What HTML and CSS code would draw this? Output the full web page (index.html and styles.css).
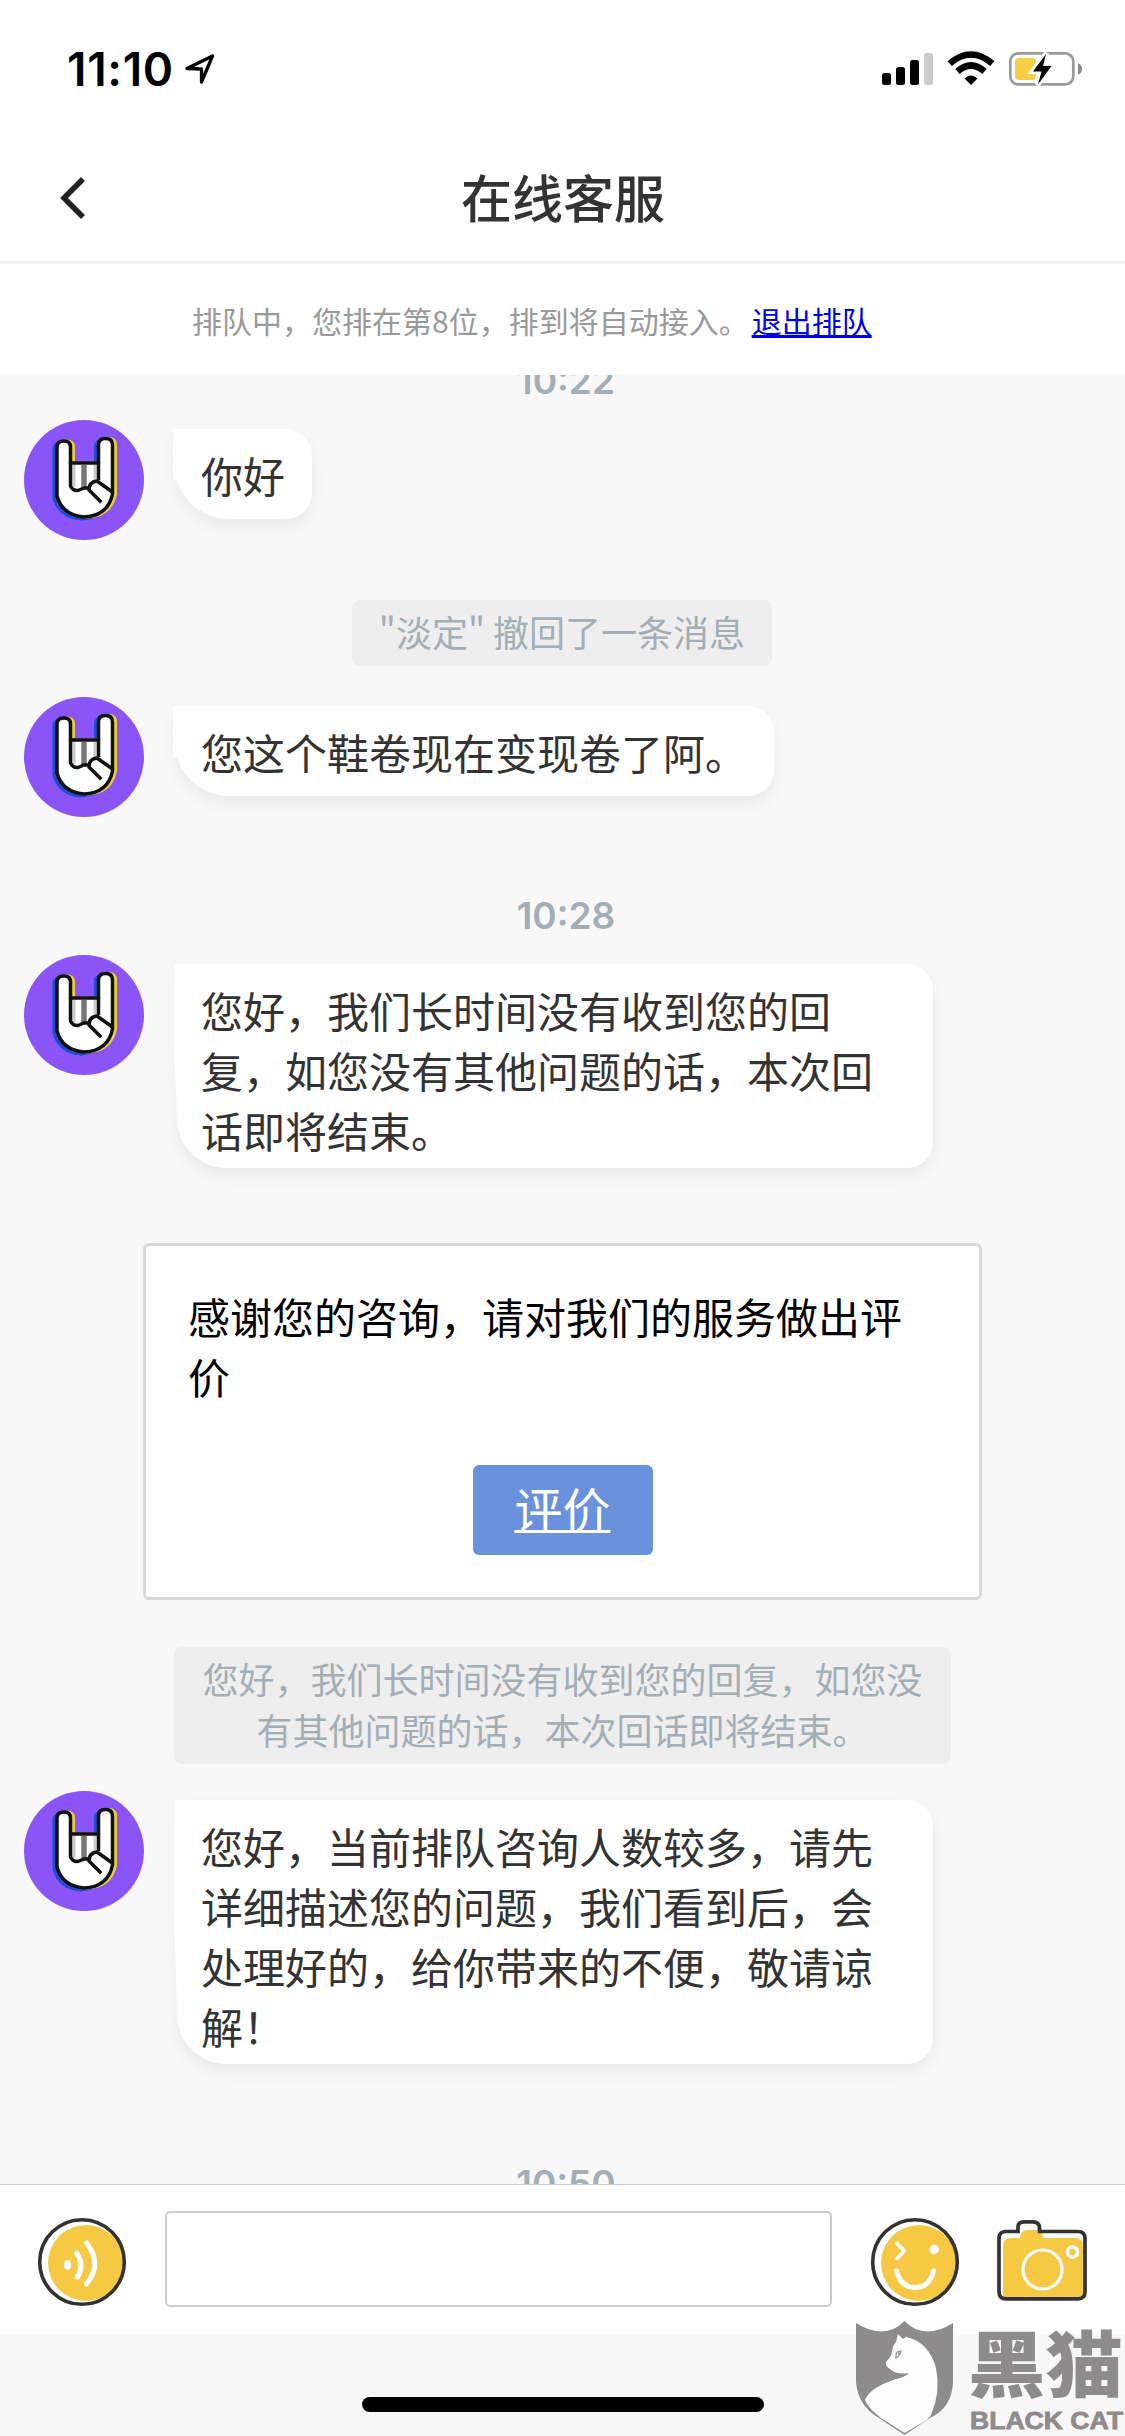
FILE: index.html
```html
<!DOCTYPE html>
<html lang="zh-CN">
<head>
<meta charset="utf-8">
<title>在线客服</title>
<link rel="stylesheet" href="styles.css">
</head>
<body>
<svg class="defs" width="0" height="0">
  <symbol id="avatar" viewBox="0 0 120 120">
    <circle cx="60" cy="60" r="60" fill="#8b54f7"/>
    <g stroke-linejoin="round">
      <path transform="translate(-3 2)" fill="#1b4fd8" stroke="#1b4fd8" stroke-width="3" d="M33 27Q33 21 40 21Q46.500 21 46.500 27V43H74.500V25Q74.500 18.500 81.500 18.500Q88.500 18.500 88.500 25V74Q84 96 60 97Q38 95 33 76Z"/>
      <path transform="translate(3 0)" fill="#e8d03c" stroke="#e8d03c" stroke-width="3" d="M33 27Q33 21 40 21Q46.500 21 46.500 27V43H74.500V25Q74.500 18.500 81.500 18.500Q88.500 18.500 88.500 25V74Q84 96 60 97Q38 95 33 76Z"/>
      <path fill="#fff" stroke="#111" stroke-width="3.500" d="M33 27Q33 21 40 21Q46.500 21 46.500 27V43H74.500V25Q74.500 18.500 81.500 18.500Q88.500 18.500 88.500 25V74Q84 96 60 97Q38 95 33 76Z"/>
      <path d="M60 45V68" stroke="#777" stroke-width="5.500" fill="none"/>
      <path d="M50 45V67M71 45V60" stroke="#ccc" stroke-width="3" fill="none"/>
      <path d="M46.500 42V66Q49 71 54 70.500L60 68H65M74.500 42V60" fill="none" stroke="#111" stroke-width="3.500"/>
      <path d="M76 81L65 70Q65 62 73 61L87 71" fill="#fff" stroke="#111" stroke-width="3.500" stroke-linecap="square"/>
    </g>
  </symbol>
</svg>
<div class="screen">
  <header class="status">
    <div class="clock">
      <span>11:10</span>
      <svg width="32" height="32" viewBox="0 0 32 32"><path d="M3 15.500L28.500 3L17.500 29V16Z" fill="none" stroke="#000" stroke-width="3.300" stroke-linejoin="round"/></svg>
    </div>
    <svg width="204" height="36" viewBox="0 0 204 36">
      <rect x="2" y="22" width="9" height="12" rx="2.500"/>
      <rect x="16" y="16" width="9" height="18" rx="2.500"/>
      <rect x="30" y="9" width="9" height="25" rx="2.500"/>
      <rect x="44" y="2" width="9" height="32" rx="2.500" fill="#ccc"/>
      <path d="M69.700 12.500Q91 -5.500 112.300 12.500" fill="none" stroke="#000" stroke-width="6.500"/>
      <path d="M77.500 20.500Q91 8.500 104.500 20.500" fill="none" stroke="#000" stroke-width="6.500"/>
      <path d="M84.500 27.500Q91 21.500 97.500 27.500L91 34Z"/>
      <rect x="130.300" y="2.400" width="63" height="31" rx="8" fill="none" stroke="#9a9a9a" stroke-width="2.700"/>
      <rect x="135" y="7" width="21" height="22" rx="4" fill="#f8ce45"/>
      <path d="M198 12Q202 14 202 18Q202 22 198 24Z" fill="#8c8c8c"/>
      <path d="M166.500 2L152.500 20.500H161L157.500 34L171.500 15H163Z" stroke="#fff" stroke-width="5" fill="#fff"/>
      <path d="M166 3L153 20.500H161.500L158 33.500L171.500 15H163Z"/>
    </svg>
  </header>
  <nav class="titlebar">
    <svg width="32" height="44" viewBox="0 0 32 44"><path d="M26 3L7 22L26 41" fill="none" stroke="#222" stroke-width="5.500"/></svg>
    <h1>在线客服</h1>
  </nav>
  <div class="queue"><span>排队中，您排在第8位，排到将自动接入。</span><a href="#">退出排队</a></div>

  <main class="chat">
    <time class="stamp stamp-first">10:22</time>
    <div class="row after-stamp">
      <svg class="avatar"><use href="#avatar"/></svg>
      <p class="bubble">你好</p>
    </div>
    <div class="notice notice-recall">"淡定" 撤回了一条消息</div>
    <div class="row after-recall">
      <svg class="avatar"><use href="#avatar"/></svg>
      <p class="bubble">您这个鞋卷现在变现卷了阿。</p>
    </div>
    <time class="stamp stamp-mid">10:28</time>
    <div class="row after-stamp">
      <svg class="avatar"><use href="#avatar"/></svg>
      <p class="bubble bubble-long">您好，我们长时间没有收到您的回<br>复，如您没有其他问题的话，本次回<br>话即将结束。</p>
    </div>
    <section class="card">
      <p>感谢您的咨询，请对我们的服务做出评价</p>
      <a class="rate" href="#">评价</a>
    </section>
    <div class="notice notice-timeout">您好，我们长时间没有收到您的回复，如您没<br>有其他问题的话，本次回话即将结束。</div>
    <div class="row after-notice">
      <svg class="avatar"><use href="#avatar"/></svg>
      <p class="bubble bubble-long">您好，当前排队咨询人数较多，请先<br>详细描述您的问题，我们看到后，会<br>处理好的，给你带来的不便，敬请谅<br>解！</p>
    </div>
    <time class="stamp stamp-last">10:50</time>
  </main>

  <footer class="composer">
    <svg class="voice" width="90" height="90" viewBox="0 0 90 90">
      <circle cx="49" cy="46" r="38" fill="#f5c944"/>
      <circle cx="45" cy="45" r="42.300" fill="none" stroke="#333" stroke-width="3.600"/>
      <ellipse cx="30.500" cy="48" rx="3.700" ry="5" fill="#fff"/>
      <path d="M39.500 36Q48 47 40.500 60M49.500 26Q66 47 49.500 67" fill="none" stroke="#fff" stroke-width="5" stroke-linecap="round"/>
    </svg>
    <input class="field" type="text" aria-label="消息">
    <svg class="smile" width="90" height="90" viewBox="0 0 90 90">
      <circle cx="49" cy="46" r="38" fill="#f5c944"/>
      <circle cx="45" cy="45" r="42.300" fill="none" stroke="#333" stroke-width="3.600"/>
      <path d="M27 26.500L34.500 34L27 41.500" fill="none" stroke="#fff" stroke-width="3.600" stroke-linecap="round" stroke-linejoin="round"/>
      <circle cx="64.300" cy="32.500" r="4.700" fill="#fff"/>
      <path d="M26.500 54Q31 70.500 45 70.500Q59.500 70.500 63.500 54" fill="none" stroke="#fff" stroke-width="5" stroke-linecap="round"/>
    </svg>
    <svg class="camera" width="92" height="84" viewBox="0 0 92 84">
      <path d="M14 19H24Q25 11 31 11H41Q47 12 47 19H80Q87 20 87 27V78H7V26Q7 20 14 19Z" fill="#f5c944"/>
      <path d="M8 12.500H22V8Q22 2.800 28 2.800H37Q43.500 3 43.500 9V12.500H82Q89 12.500 89 19.500V73Q89 79.800 82 79.800H10Q3 79.800 3 73V19.500Q3 12.500 10 12.500Z" fill="none" stroke="#333" stroke-width="3.700"/>
      <circle cx="46.500" cy="50.500" r="19.500" fill="none" stroke="#fff" stroke-width="3.200"/>
      <circle cx="76.500" cy="33" r="5" fill="none" stroke="#fff" stroke-width="3.600"/>
    </svg>
  </footer>
  <div class="home"><i></i></div>

  <svg class="watermark" width="271" height="116" viewBox="0 0 271 116">
    <path d="M2 3Q31 21 50.500 1Q70 21 99 3V62Q98 88 76 98L50.500 115L25 98Q4 86 2 62Z" fill="#8e8b8c"/>
    <path d="M44 14L49 19L52 17Q75 22 82 48Q87 72 77 95L73 100L50.500 113L27 98Q14 88 11 80Q15 68 42 59Q51 57 55 53Q42 55 36 49Q31 46 32 42Q38 36 38 31Q39 25 42 22Z" fill="#fcfcfc"/>
    <path d="M42 35Q42 31 47 31Q46 36 42 38ZM45 32V36" fill="none" stroke="#8e8b8c" stroke-width="1.200"/>
    <text class="brand" x="114" y="71" textLength="155" lengthAdjust="spacingAndGlyphs">黑猫</text>
    <text class="brand-en" x="116" y="109" textLength="153" lengthAdjust="spacingAndGlyphs">BLACK CAT</text>
  </svg>
</div>
</body>
</html>
```
FILE: styles.css
```css
* { box-sizing: border-box; }
body {
  margin: 0;
  background: #fff;
  font-family: "Noto Sans CJK SC", "Noto Sans", sans-serif;
}
p, h1 { margin: 0; }
.defs { display: block; height: 0; }
.screen {
  position: relative;
  display: flex;
  flex-direction: column;
  width: 1125px;
  height: 2436px;
  overflow: hidden;
}
.status {
  display: flex;
  justify-content: space-between;
  align-items: center;
  height: 138px;
  padding: 0 41px 0 67px;
}
.clock {
  display: flex;
  align-items: center;
  gap: 10px;
  font: 600 46px/50px Inter, sans-serif;
  letter-spacing: .7px;
}
.titlebar {
  display: flex;
  align-items: center;
  height: 126px;
  padding: 0 57px 4px;
  border-bottom: 3px solid #f1f1f1;
}
.titlebar h1 {
  flex: 1;
  margin: -4px 31px 0 0;
  text-align: center;
  font-size: 51px;
  font-weight: 500;
  line-height: 60px;
  color: #333;
}
.queue {
  display: flex;
  gap: 3px;
  height: 111px;
  padding-left: 192px;
  font-size: 30px;
  line-height: 113px;
  color: #999;
}
.queue a { color: #00e; }
.chat {
  display: flex;
  flex-direction: column;
  align-items: center;
  height: 1809px;
  overflow: hidden;
  background: #f8f8f8;
}
.chat > * { flex-shrink: 0; }
.stamp {
  font: 600 37px/40px Inter, sans-serif;
  color: #a3aeb7;
  padding-left: 7px;
}
.stamp-first { margin-top: -14px; }
.stamp-mid { margin-top: 79px; }
.stamp-last { margin-top: 100px; }
.row {
  display: flex;
  align-items: flex-start;
  gap: 31px;
  width: 100%;
  padding-left: 24px;
}
.after-stamp { margin-top: 19px; }
.after-recall { margin-top: 31px; }
.after-notice { margin-top: 27px; }
.avatar { width: 120px; height: 120px; }
.bubble {
  position: relative;
  min-height: 90px;
  margin-top: 9px;
  padding: 16px 27px 8px 26px;
  border-radius: 0 26px 26px 54px;
  background: #fff;
  box-shadow: 0 8px 16px rgba(0, 0, 0, .06);
  font-size: 42px;
  line-height: 60px;
  color: #333;
}
/* tail that squares off the corner beside the avatar */
.bubble::before {
  content: "";
  position: absolute;
  left: -2px;
  top: 0;
  width: 20px;
  height: 51px;
  background: #fff;
}
.bubble-long {
  width: 756px;
  margin-left: 2px;
  padding-left: 24px;
  border-bottom-left-radius: 50px;
}
.bubble-long::before {
  left: -3px;
  height: calc(100% - 48px);
  clip-path: polygon(0 0, 100% 0, 100% 100%, 3px 100%, 0 50%);
}
.notice {
  padding: 6px 28px 9px;
  border-radius: 8px;
  background: #eee;
  font-size: 36px;
  line-height: 51px;
  color: #a3aeb7;
  text-align: center;
}
.notice-recall { margin: 60px 1px 0 0; width: 420px; padding-left: 0; padding-right: 0; }
.notice-timeout { margin-top: 47px; width: 777px; }
.card {
  display: flex;
  flex-direction: column;
  width: 839px;
  height: 357px;
  margin-top: 75px;
  padding: 40px 42px 38px;
  border: 3px solid #d9d9d9;
  border-radius: 6px;
  background: #fff;
  font-size: 42px;
  line-height: 60px;
  color: #000;
}
.rate {
  align-self: center;
  width: 180px;
  height: 90px;
  margin-top: 59px;
  border-radius: 6px;
  background: #6a91db;
  color: #fff;
  font-size: 48px;
  line-height: 84px;
  text-align: center;
  text-underline-offset: 2px;
  text-decoration-thickness: 3px;
  text-decoration-skip-ink: none;
}
.composer {
  display: flex;
  align-items: center;
  height: 150px;
  padding-left: 37px;
  border-top: 1px solid #ccc;
  background: #fff;
}
.voice { margin-top: 5px; }
.field {
  width: 667px;
  height: 96px;
  margin: 0 0 2px 38px;
  border: 2px solid #ccc;
  border-radius: 5px;
  background: #fff;
}
.smile { margin: 5px 0 0 38px; }
.camera { margin: 2px 0 0 36px; }
.home {
  display: flex;
  justify-content: center;
  height: 102px;
  padding-top: 63px;
  background: #f7f7f7;
}
.home i { width: 402px; height: 15px; border-radius: 8px; background: #000; }
.watermark { position: absolute; left: 854px; top: 2320px; }
.brand { font: 900 72px "Noto Sans CJK SC", sans-serif; fill: #8e8b8c; }
.brand-en { font: 700 24px "Liberation Sans", sans-serif; fill: #8e8b8c; stroke: #8e8b8c; stroke-width: .8px; }
```
